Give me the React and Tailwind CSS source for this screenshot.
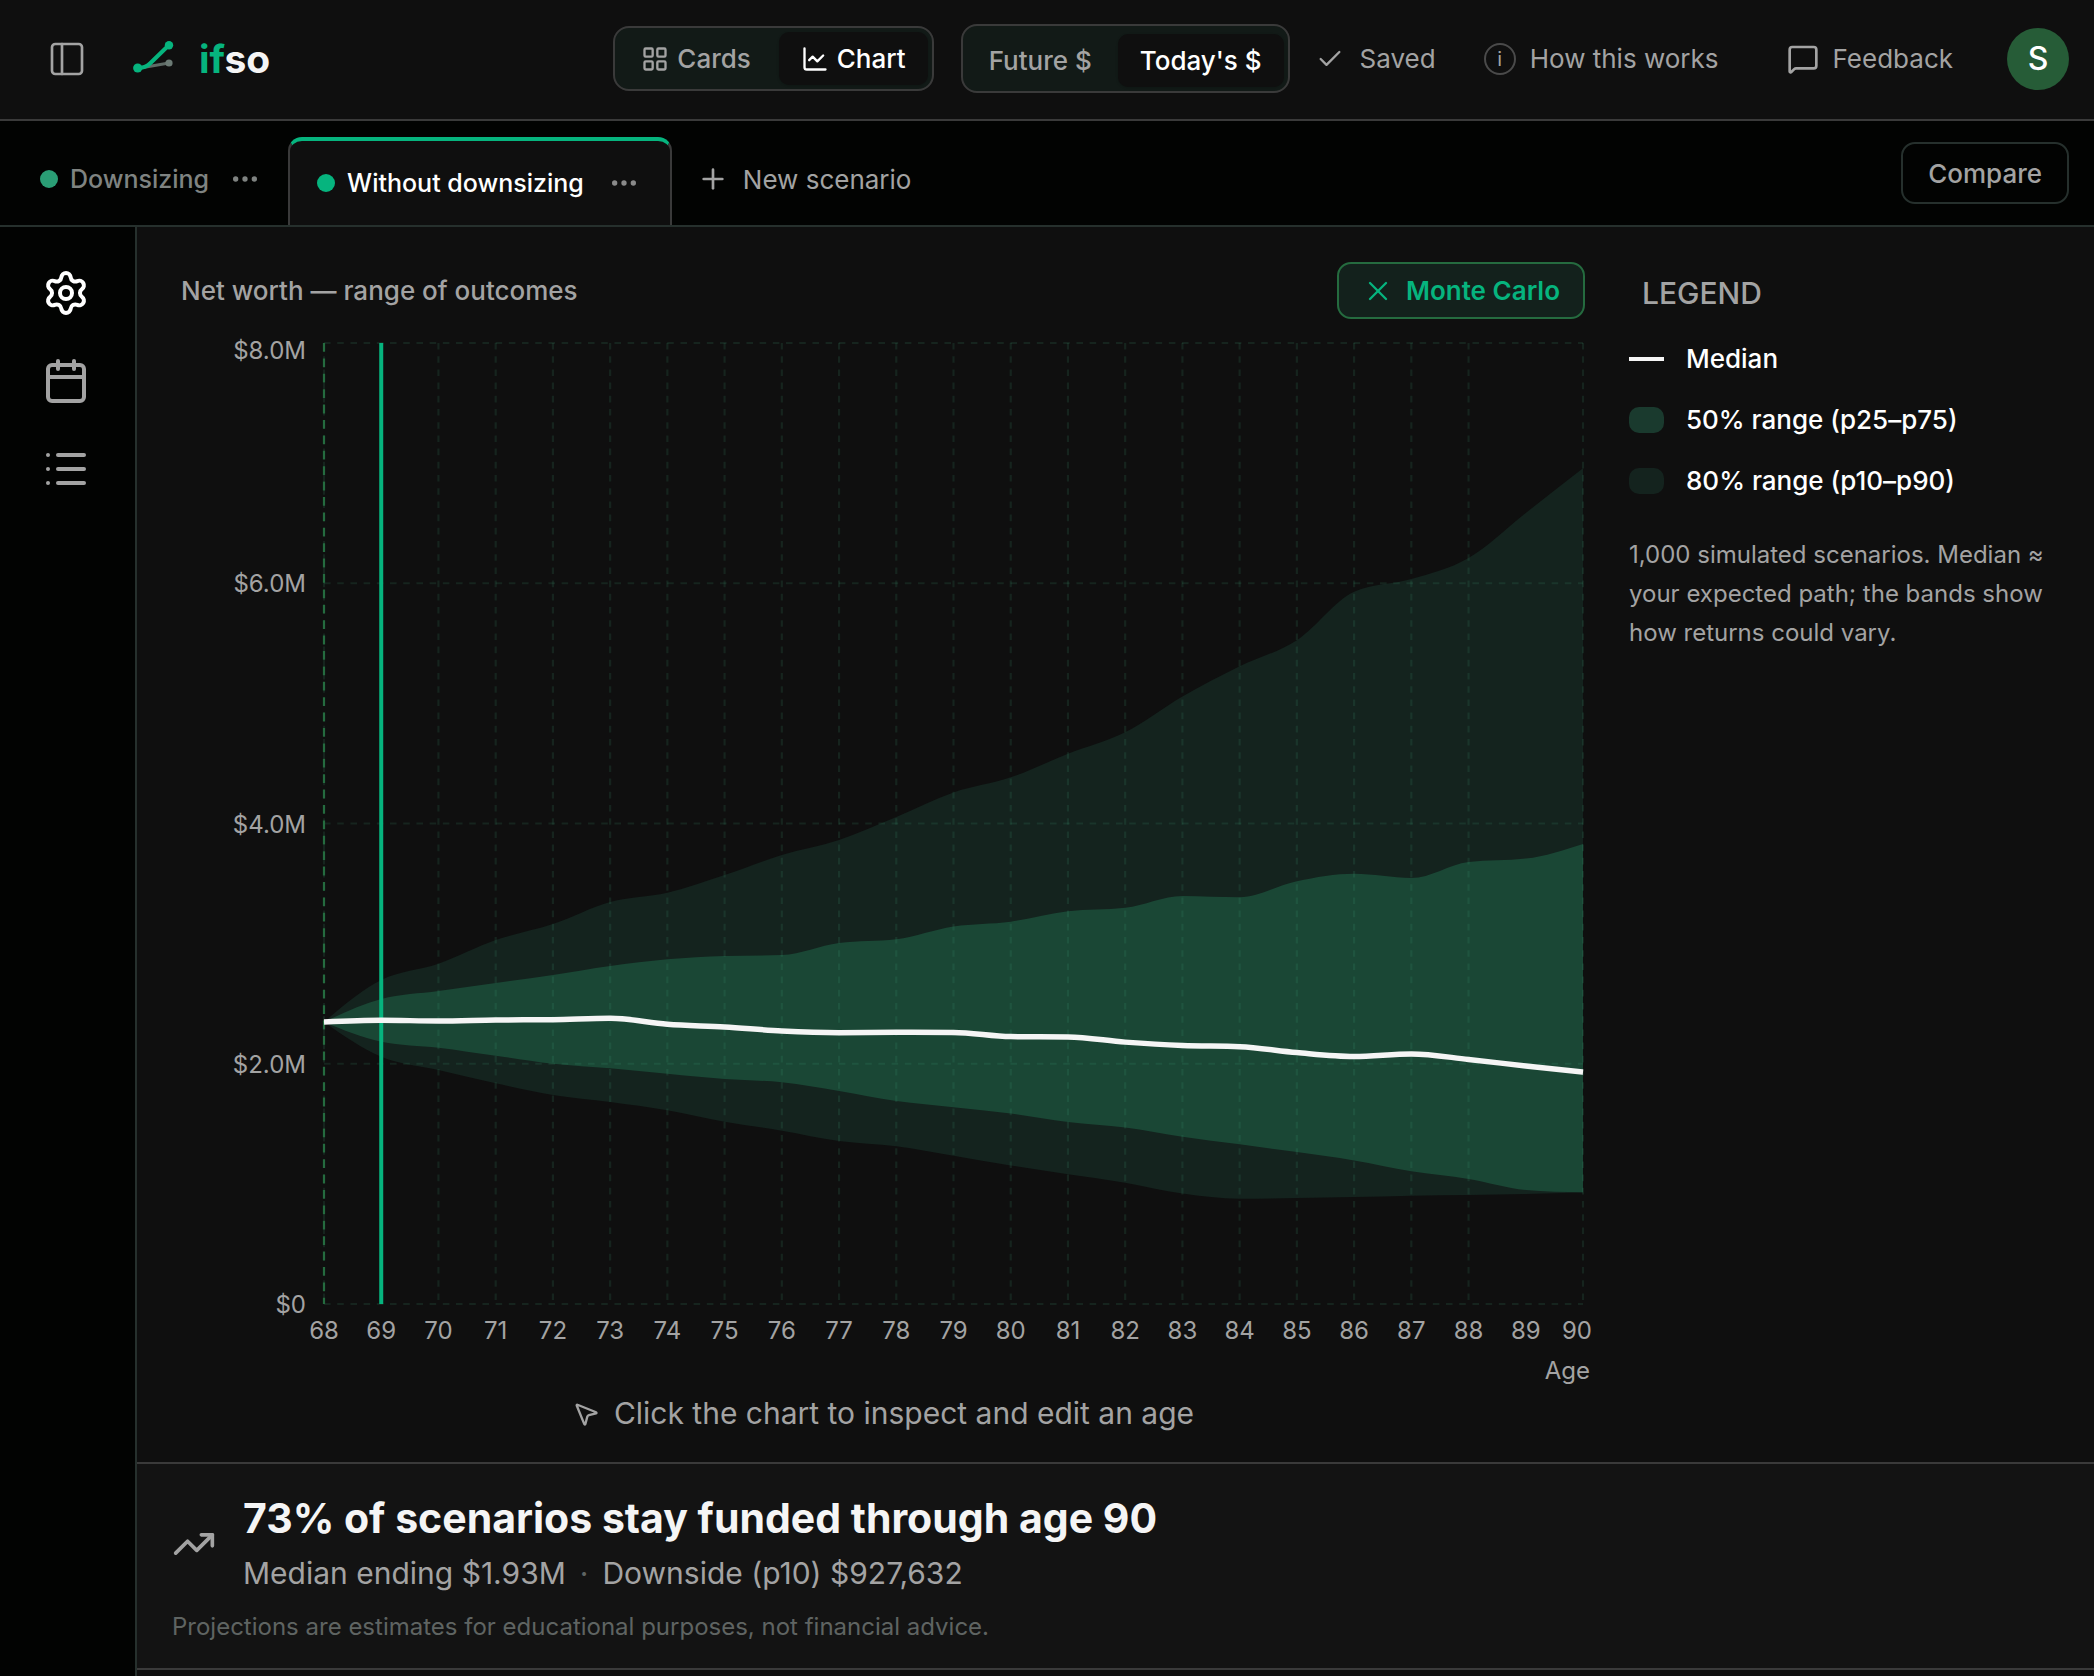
import {
  Calendar,
  ChartLine,
  Check,
  Ellipsis,
  LayoutGrid,
  List,
  MessageSquare,
  MousePointer2,
  PanelLeft,
  Plus,
  Settings,
  TrendingUp,
  X,
} from "lucide-react";

// net worth percentiles per age, in thousands of dollars
const FIRST_AGE = 68;
const LAST_AGE = 90;
const CURRENT_AGE = 69;
const MAX_VALUE = 8000;

const p90 = [
  2348, 2697, 2833, 3030, 3163, 3347, 3424, 3571, 3738, 3863, 4054, 4258, 4384,
  4580, 4759, 5057, 5309, 5526, 5929, 6035, 6210, 6585, 6957,
];
const p75 = [
  2348, 2539, 2606, 2672, 2739, 2814, 2870, 2897, 2905, 3005, 3036, 3143, 3183,
  3270, 3298, 3397, 3386, 3519, 3581, 3546, 3680, 3708, 3830,
];
const p50 = [
  2348, 2362, 2356, 2364, 2367, 2378, 2329, 2306, 2273, 2259, 2262, 2261, 2226,
  2223, 2180, 2152, 2142, 2093, 2061, 2082, 2036, 1981, 1930,
];
const p25 = [
  2348, 2184, 2134, 2067, 2000, 1962, 1917, 1873, 1846, 1773, 1690, 1638, 1585,
  1515, 1469, 1392, 1329, 1265, 1195, 1105, 1041, 950, 930,
];
const p10 = [
  2348, 2059, 1948, 1837, 1740, 1682, 1613, 1518, 1443, 1357, 1313, 1235, 1154,
  1080, 1010, 919, 877, 882, 891, 902, 907, 916, 928,
];

const plot = { left: 143, right: 1402, top: 12, bottom: 973 };
const ages = p50.map((_, i) => FIRST_AGE + i);
const yTicks = [
  { value: 8000, label: "$8.0M" },
  { value: 6000, label: "$6.0M" },
  { value: 4000, label: "$4.0M" },
  { value: 2000, label: "$2.0M" },
  { value: 0, label: "$0" },
];

const xOf = (age) =>
  plot.left + ((age - FIRST_AGE) / (LAST_AGE - FIRST_AGE)) * (plot.right - plot.left);
const yOf = (value) => plot.bottom - (value / MAX_VALUE) * (plot.bottom - plot.top);

const toPoints = (values) => values.map((v, i) => [xOf(FIRST_AGE + i), yOf(v)]);

// monotone cubic through the points, without the leading "M"
function curve(points) {
  const n = points.length;
  const slopes = points
    .slice(1)
    .map(([x, y], i) => (y - points[i][1]) / (x - points[i][0]));
  const tangents = points.map((_, i) => {
    if (i === 0 || i === n - 1) return null;
    const a = slopes[i - 1];
    const b = slopes[i];
    if (a * b <= 0) return 0;
    return (
      Math.sign(a) * 2 * Math.min(Math.abs(a), Math.abs(b), Math.abs(a + b) / 4)
    );
  });
  tangents[0] = (3 * slopes[0] - tangents[1]) / 2;
  tangents[n - 1] = (3 * slopes[n - 2] - tangents[n - 2]) / 2;

  let d = `${points[0][0]},${points[0][1]}`;
  for (let i = 1; i < n; i++) {
    const [x0, y0] = points[i - 1];
    const [x1, y1] = points[i];
    const dx = (x1 - x0) / 3;
    d += `C${x0 + dx},${y0 + dx * tangents[i - 1]} ${x1 - dx},${y1 - dx * tangents[i]} ${x1},${y1}`;
  }
  return d;
}

const linePath = (values) => `M${curve(toPoints(values))}`;
const bandPath = (upper, lower) =>
  `M${curve(toPoints(upper))}L${curve(toPoints(lower).reverse())}Z`;

function Logo() {
  return (
    <a href="/" className="flex items-center gap-6">
      <svg className="w-11 h-9" viewBox="0 0 44 36" fill="none" aria-hidden="true">
        <path d="M12 26.5 L38 22" stroke="#5f6b66" strokeWidth="3" />
        <circle cx="38" cy="22" r="3.6" fill="#6b7a74" />
        <path
          d="M6.7 27 C13 27 16 25.5 19 22.5 L38 4"
          stroke="#06b47e"
          strokeWidth="4"
          strokeLinecap="round"
        />
        <circle cx="6.7" cy="27" r="4.6" fill="#06b47e" />
        <circle cx="38" cy="4.2" r="4.2" fill="#06b47e" />
      </svg>
      <span className="text-[39px] leading-none font-bold text-[#f5f5f5]">
        <span className="text-[#06b47e]">if</span>so
      </span>
    </a>
  );
}

function SegmentButton({ active, children }) {
  return (
    <button
      type="button"
      aria-pressed={active}
      className={
        active
          ? "h-[53px] px-[22px] flex items-center gap-2 rounded-[10px] bg-[#0f0f0f] text-white font-medium shadow-sm"
          : "h-[53px] px-[22px] flex items-center gap-2 rounded-[10px] text-[#a3a3a3] font-medium"
      }
    >
      {children}
    </button>
  );
}

function Header() {
  return (
    <header className="h-[121px] shrink-0 flex items-center justify-between pl-[47px] pr-[25px] pb-[2px] border-b-2 border-[#3a3a3a] bg-[#0f0f0f]">
      <div className="flex items-center gap-11">
        <button type="button" aria-label="Toggle sidebar" className="text-[#a3a3a3]">
          <PanelLeft size={40} strokeWidth={1.6} />
        </button>
        <Logo />
      </div>
      <div className="flex items-center gap-6">
        <div className="flex items-center gap-[27px]">
          <div className="flex gap-[6px] p-1 border-2 border-[#3a3a3a] rounded-[16px] bg-[#121a17]">
            <SegmentButton>
              <LayoutGrid size={28} />
              Cards
            </SegmentButton>
            <SegmentButton active>
              <ChartLine size={28} />
              Chart
            </SegmentButton>
          </div>
          <div className="flex gap-1 px-1 pt-2 pb-1 mr-[2px] border-2 border-[#3a3a3a] rounded-[16px] bg-[#121a17]">
            <SegmentButton>Future $</SegmentButton>
            <SegmentButton active>Today's $</SegmentButton>
          </div>
        </div>
        <span className="flex items-center gap-4">
          <Check size={28} />
          Saved
        </span>
        <button type="button" className="flex items-center gap-[14px] px-6">
          <span className="w-8 h-8 flex items-center justify-center rounded-full border-2 border-[#4a4a4a] text-xl leading-none">
            i
          </span>
          How this works
        </button>
        <button type="button" className="flex items-center gap-[14px] pl-5 pr-[30px]">
          <MessageSquare size={32} />
          Feedback
        </button>
        <button
          type="button"
          aria-label="Account"
          className="w-[62px] h-[62px] rounded-full bg-[#265c37] text-white text-[32px] leading-none font-medium"
        >
          S
        </button>
      </div>
    </header>
  );
}

function ScenarioTabs() {
  return (
    <nav className="h-[106px] shrink-0 flex items-end pl-10 pr-[25px] border-b-2 border-[#26302d] bg-[#020302]">
      <div className="h-[92px] flex items-center gap-5 pr-[27px] text-[25px] text-[#7f8381]">
        <button type="button" className="flex items-center gap-3 font-medium">
          <span className="w-[18px] h-[18px] rounded-full bg-[#2a9e75]" />
          Downsizing
        </button>
        <button type="button" aria-label="Downsizing options">
          <Ellipsis size={32} />
        </button>
      </div>
      <div className="h-[88px] flex items-center gap-6 pl-[27px] pr-[30px] border-x-2 border-t-4 border-x-[#3a3a3a] border-t-[#06b47e] rounded-t-[14px] bg-[#0f0f0f] text-[25px]">
        <button type="button" className="flex items-center gap-3 font-medium text-white">
          <span className="w-[18px] h-[18px] rounded-full bg-[#06b47e]" />
          Without downsizing
        </button>
        <button
          type="button"
          aria-label="Without downsizing options"
          className="text-[#8a8a8a]"
        >
          <Ellipsis size={32} />
        </button>
      </div>
      <button type="button" className="h-[92px] flex items-center gap-[14px] ml-[25px]">
        <Plus size={32} />
        New scenario
      </button>
      <button
        type="button"
        className="h-[62px] px-[25px] ml-auto self-center border-2 border-[#26302d] rounded-[14px] font-medium"
      >
        Compare
      </button>
    </nav>
  );
}

function Sidebar() {
  return (
    <aside className="w-[137px] shrink-0 flex flex-col items-center gap-10 pt-[42px] pr-[3px] border-r-2 border-[#26302d] bg-[#020302]">
      <button type="button" aria-label="Settings" className="text-white">
        <Settings size={48} />
      </button>
      <button type="button" aria-label="Calendar">
        <Calendar size={48} />
      </button>
      <button type="button" aria-label="List">
        <List size={48} />
      </button>
    </aside>
  );
}

function NetWorthChart() {
  return (
    <svg
      className="w-full h-auto mt-3 overflow-visible"
      viewBox="0 0 1411 1050"
      role="img"
      aria-label="Net worth by age"
    >
      <path d={bandPath(p90, p10)} fill="#14231e" />
      <path d={bandPath(p75, p25)} fill="#1a4735" />
      <g stroke="#46b482" strokeOpacity="0.13" strokeWidth="2.2" strokeDasharray="6.6 6.6">
        {yTicks.map(({ value }) => (
          <line
            key={value}
            x1={plot.left}
            x2={plot.right}
            y1={yOf(value)}
            y2={yOf(value)}
          />
        ))}
        {ages
          .filter((age) => age !== 89)
          .map((age) => (
            <line
              key={age}
              x1={xOf(age)}
              x2={xOf(age)}
              y1={plot.top}
              y2={plot.bottom}
            />
          ))}
      </g>
      <line
        x1={plot.left}
        x2={plot.left}
        y1={plot.top}
        y2={plot.bottom}
        stroke="#256b3f"
        strokeWidth="2.2"
        strokeDasharray="8.8 6.6"
      />
      <line
        x1={xOf(CURRENT_AGE)}
        x2={xOf(CURRENT_AGE)}
        y1={plot.top}
        y2={plot.bottom}
        stroke="#06b47e"
        strokeWidth="4"
      />
      <path d={linePath(p50)} fill="none" stroke="#f5f5f5" strokeWidth="5.5" />
      <g fill="#a3a3a3" fontSize="24">
        {yTicks.map(({ value, label }) => (
          <text
            key={value}
            x={125}
            y={yOf(value) + (value === MAX_VALUE ? 16 : 9)}
            textAnchor="end"
          >
            {label}
          </text>
        ))}
        {ages.map((age) => (
          <text
            key={age}
            x={age === LAST_AGE ? 1411 : xOf(age)}
            y={1008}
            textAnchor={age === LAST_AGE ? "end" : "middle"}
          >
            {age}
          </text>
        ))}
        <text x={1409} y={1048} textAnchor="end">
          Age
        </text>
      </g>
    </svg>
  );
}

function Legend() {
  return (
    <aside className="w-[465px] shrink-0 pt-11 pr-10">
      <h2 className="pl-[13px] text-3xl leading-[45px] font-medium">LEGEND</h2>
      <ul className="mt-[23px] flex flex-col gap-[22px] leading-[39px] font-medium text-white">
        <li className="flex items-center gap-[22px]">
          <span className="w-[35px] h-1 bg-[#f5f5f5]" />
          Median
        </li>
        <li className="flex items-center gap-[22px]">
          <span className="w-[35px] h-[26px] rounded-[10px] bg-[#1a3a2e]" />
          50% range (p25–p75)
        </li>
        <li className="flex items-center gap-[22px]">
          <span className="w-[35px] h-[26px] rounded-[10px] bg-[#14231e]" />
          80% range (p10–p90)
        </li>
      </ul>
      <p className="mt-[35px] text-2xl leading-[39px]">
        1,000 simulated scenarios. Median ≈ your expected path; the bands show how
        returns could vary.
      </p>
    </aside>
  );
}

function Summary() {
  return (
    <section className="pt-7 pb-[23px] px-[35px] border-y-2 border-[#3a3a3a] bg-[#131313]">
      <div className="flex items-center gap-[27px]">
        <TrendingUp size={44} />
        <div>
          <h1 className="text-[41px] leading-[52px] font-bold text-[#f5f5f5]">
            73% of scenarios stay funded through age 90
          </h1>
          <p className="mt-[7px] text-3xl leading-[45px]">
            Median ending $1.93M
            <span className="mx-[14px] text-[#5f6462]">·</span>
            Downside (p10) $927,632
          </p>
        </div>
      </div>
      <p className="mt-[13px] text-2xl leading-9 text-[#5f6462]">
        Projections are estimates for educational purposes, not financial advice.
      </p>
    </section>
  );
}

export default function App() {
  return (
    <div className="min-h-screen flex flex-col bg-[#0f0f0f] font-['Inter',sans-serif] text-[26px] leading-[39px] text-[#a3a3a3]">
      <Header />
      <ScenarioTabs />
      <div className="flex-1 flex">
        <Sidebar />
        <main className="flex-1 min-w-0">
          <div className="flex gap-[37px]">
            <div className="flex-1 min-w-0 pl-11 pt-[35px] pb-[26px]">
              <div className="flex items-center justify-between mr-[7px]">
                <h2 className="font-medium">Net worth — range of outcomes</h2>
                <button
                  type="button"
                  className="h-[57px] px-[23px] flex items-center gap-3 border-2 border-[#256b3f] rounded-[14px] bg-[#13211c] text-[#06b47e] font-semibold"
                >
                  <X size={32} strokeWidth={1.75} />
                  Monte Carlo
                </button>
              </div>
              <NetWorthChart />
              <p className="mt-[10px] mr-[7px] flex items-center justify-center gap-[14px] text-3xl leading-[45px]">
                <MousePointer2 size={28} />
                Click the chart to inspect and edit an age
              </p>
            </div>
            <Legend />
          </div>
          <Summary />
        </main>
      </div>
    </div>
  );
}
